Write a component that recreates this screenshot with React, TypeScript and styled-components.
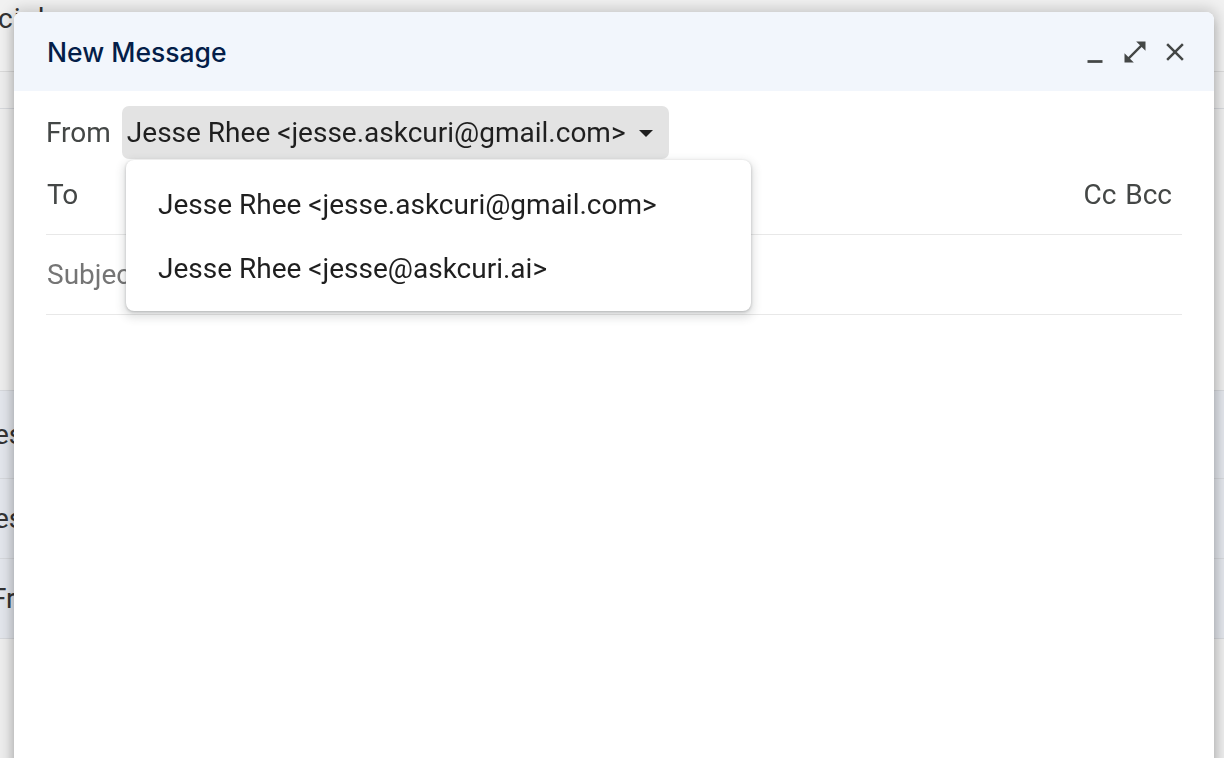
import React from "react";
import styled, { createGlobalStyle } from "styled-components";

const Global = createGlobalStyle`
  *, *::before, *::after { box-sizing: border-box; }
  html, body { margin: 0; padding: 0; }
  body {
    width: 1224px;
    height: 758px;
    overflow: hidden;
    background: #eeeeee;
    font-family: Roboto, "Liberation Sans", Arial, sans-serif;
  }
`;

const Inbox = styled.div`
  display: flex;
  flex-direction: column;
  width: 1224px;
  height: 758px;
  background: #f1f1f1;
  overflow: hidden;
`;

const TabBar = styled.div`
  height: 72px;
  border-bottom: 1px solid #dadada;
  display: flex;
  align-items: flex-start;
  font-size: 28px;
  color: #333;
  flex: none;
`;

const TabLabel = styled.span`
  margin-left: -2px;
  margin-top: 4px;
  line-height: 30px;
  letter-spacing: 1px;
`;

const Strip = styled.div<{ $h: number; $tone?: "blue" | "plain" }>`
  height: ${(p) => p.$h}px;
  flex: none;
  border-bottom: 1px solid #d6d8dc;
  background: ${(p) => (p.$tone === "blue" ? "#e3e6ec" : "#eeeeee")};
  display: flex;
  align-items: center;
  font-size: 28px;
  color: #333;
`;

const RowText = styled.span<{ $shift: number }>`
  margin-left: ${(p) => p.$shift}px;
  white-space: nowrap;
`;

const Compose = styled.div`
  position: fixed;
  left: 14px;
  top: 12px;
  width: 1200px;
  height: 780px;
  background: #fff;
  border-radius: 8px 8px 0 0;
  box-shadow: 0 0 14px 3px rgba(0, 0, 0, 0.18),
    0 8px 10px 1px rgba(0, 0, 0, 0.12), 0 5px 5px -3px rgba(0, 0, 0, 0.16);
  display: flex;
  flex-direction: column;
`;

const Header = styled.div`
  height: 79px;
  background: #f2f6fc;
  border-radius: 8px 8px 0 0;
  display: flex;
  align-items: center;
  padding: 0 24px 0 33px;
  flex: none;
`;

const Title = styled.div`
  flex: 1;
  font-family: Inter, Roboto, sans-serif;
  font-size: 26.5px;
  font-weight: 500;
  color: #041e49;
`;

const HeaderIcons = styled.div`
  display: flex;
  align-items: center;
  gap: 10px;
`;

const IconBtn = styled.button`
  width: 30px;
  height: 30px;
  padding: 0;
  border: 0;
  background: transparent;
  display: flex;
  align-items: center;
  justify-content: center;
  color: #444746;
`;

const Body = styled.div`
  padding: 0 32px;
  display: flex;
  flex-direction: column;
`;

const FromRow = styled.div`
  height: 68px;
  display: flex;
  align-items: center;
  padding-top: 15px;
  gap: 11px;
`;

const Label = styled.span`
  font-size: 28px;
  color: #444746;
  flex: none;
`;

const FromSelect = styled.div`
  height: 53px;
  display: flex;
  align-items: center;
  gap: 12px;
  padding: 0 15px 0 5px;
  background: #e3e3e3;
  border-radius: 7px;
  font-size: 28px;
  color: #1f1f1f;
`;

const Field = styled.div<{ $h: number; $lift: number }>`
  height: ${(p) => p.$h}px;
  display: flex;
  align-items: center;
  border-bottom: 1px solid #e8e8e8;
  padding: 0 10px ${(p) => p.$lift}px 1px;
`;

const Grow = styled.div`
  flex: 1;
`;

const CcBcc = styled.span`
  font-size: 28px;
  color: #444746;
  word-spacing: 2px;
`;

const Placeholder = styled.span`
  font-size: 28px;
  color: #757575;
`;

const MenuAnchor = styled.div`
  position: relative;
  height: 0;
  z-index: 2;
`;

const Menu = styled.div`
  position: absolute;
  top: 1px;
  left: 80px;
  width: 625px;
  padding: 12px 0 11px;
  background: #fff;
  border-radius: 8px;
  box-shadow: 0 4px 8px 3px rgba(60, 64, 67, 0.15),
    0 1px 3px rgba(60, 64, 67, 0.3);
`;

const MenuItem = styled.div`
  height: 64px;
  display: flex;
  align-items: center;
  padding-left: 32px;
  font-size: 28px;
  color: #1f1f1f;
`;

const Minimize = () => (
  <svg width="32" height="32" viewBox="0 0 24 24" fill="currentColor">
    <path d="M6 18.5h12v2.2H6z" />
  </svg>
);

const Expand = () => (
  <svg width="28" height="28" viewBox="0 0 24 24" fill="currentColor">
    <path d="M21 11V3h-8l3.29 3.29-10 10L3 13v8h8l-3.29-3.29 10-10z" />
  </svg>
);

const Close = () => (
  <svg width="32" height="32" viewBox="0 0 24 24" fill="currentColor">
    <path d="M19 6.41L17.59 5 12 10.59 6.41 5 5 6.41 10.59 12 5 17.59 6.41 19 12 13.41 17.59 19 19 17.59 13.41 12z" />
  </svg>
);

const Caret = () => (
  <svg width="16" height="10" viewBox="0 0 16 10" fill="#1f1f1f">
    <path d="M1 2h14L8 9z" />
  </svg>
);

export default function App() {
  return (
    <>
      <Global />
      <Inbox>
        <TabBar>
          <TabLabel>cial</TabLabel>
        </TabBar>
        <Strip $h={37} />
        <Strip $h={282} />
        <Strip $h={88} $tone="blue">
          <RowText $shift={-6}>es</RowText>
        </Strip>
        <Strip $h={80} $tone="blue">
          <RowText $shift={-6}>es</RowText>
        </Strip>
        <Strip $h={80} $tone="blue">
          <RowText $shift={-9}>Fro</RowText>
        </Strip>
        <Strip $h={120} />
      </Inbox>
      <Compose>
        <Header>
          <Title>New Message</Title>
          <HeaderIcons>
            <IconBtn aria-label="Minimize">
              <Minimize />
            </IconBtn>
            <IconBtn aria-label="Full screen">
              <Expand />
            </IconBtn>
            <IconBtn aria-label="Close">
              <Close />
            </IconBtn>
          </HeaderIcons>
        </Header>
        <Body>
          <FromRow>
            <Label>From</Label>
            <FromSelect>
              Jesse Rhee &lt;jesse.askcuri@gmail.com&gt;
              <Caret />
            </FromSelect>
          </FromRow>
          <MenuAnchor>
            <Menu>
              <MenuItem>Jesse Rhee &lt;jesse.askcuri@gmail.com&gt;</MenuItem>
              <MenuItem>Jesse Rhee &lt;jesse@askcuri.ai&gt;</MenuItem>
            </Menu>
          </MenuAnchor>
          <Field $h={76} $lift={4}>
            <Label>To</Label>
            <Grow />
            <CcBcc>Cc Bcc</CcBcc>
          </Field>
          <Field $h={80} $lift={0}>
            <Placeholder>Subject</Placeholder>
          </Field>
        </Body>
      </Compose>
    </>
  );
}
